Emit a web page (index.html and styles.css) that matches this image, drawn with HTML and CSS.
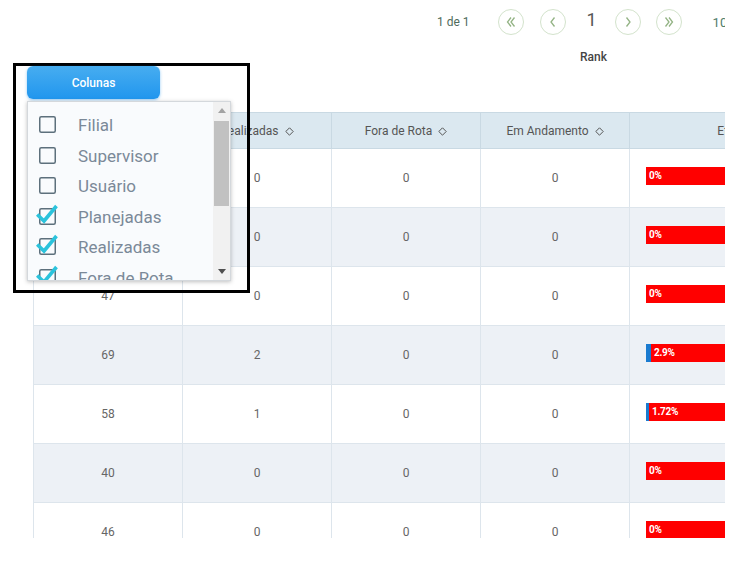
FILE: index.html
```html
<!DOCTYPE html>
<html lang="pt">
<head>
<meta charset="utf-8">
<link rel="stylesheet" href="styles.css">
</head>
<body>
<div class="page">
  <div class="pager">
    <span class="pg-info">1 de 1</span>
    <span class="pg-btn first"><svg width="12" height="12" viewBox="0 0 12 12"><path d="M6 1.5 L2.5 6 L6 10.5 M9.5 1.5 L6 6 L9.5 10.5" fill="none" stroke="#93b384" stroke-width="1.3"/></svg></span>
    <span class="pg-btn prev"><svg width="12" height="12" viewBox="0 0 12 12"><path d="M7.5 1.5 L4 6 L7.5 10.5" fill="none" stroke="#93b384" stroke-width="1.3"/></svg></span>
    <span class="pg-cur">1</span>
    <span class="pg-btn next"><svg width="12" height="12" viewBox="0 0 12 12"><path d="M4.5 1.5 L8 6 L4.5 10.5" fill="none" stroke="#93b384" stroke-width="1.3"/></svg></span>
    <span class="pg-btn last"><svg width="12" height="12" viewBox="0 0 12 12"><path d="M2.5 1.5 L6 6 L2.5 10.5 M6 1.5 L9.5 6 L6 10.5" fill="none" stroke="#93b384" stroke-width="1.3"/></svg></span>
    <span class="pg-size">10</span>
  </div>
  <div class="rank-row"><span class="rank">Rank</span></div>

  <div class="table-wrap">
    <table class="grid">
      <colgroup>
        <col class="c"><col class="c"><col class="c"><col class="c"><col class="cw">
      </colgroup>
      <thead>
        <tr>
          <th>Planejadas <svg class="sort" width="9" height="9" viewBox="0 0 9 9"><path d="M4.5 0.8 L8.2 4.5 L4.5 8.2 L0.8 4.5 Z" fill="none" stroke="#555" stroke-width="1"/></svg></th>
          <th>Realizadas <svg class="sort" width="9" height="9" viewBox="0 0 9 9"><path d="M4.5 0.8 L8.2 4.5 L4.5 8.2 L0.8 4.5 Z" fill="none" stroke="#555" stroke-width="1"/></svg></th>
          <th>Fora de Rota <svg class="sort" width="9" height="9" viewBox="0 0 9 9"><path d="M4.5 0.8 L8.2 4.5 L4.5 8.2 L0.8 4.5 Z" fill="none" stroke="#555" stroke-width="1"/></svg></th>
          <th>Em Andamento <svg class="sort" width="9" height="9" viewBox="0 0 9 9"><path d="M4.5 0.8 L8.2 4.5 L4.5 8.2 L0.8 4.5 Z" fill="none" stroke="#555" stroke-width="1"/></svg></th>
          <th>Eficiência <svg class="sort" width="9" height="9" viewBox="0 0 9 9"><path d="M4.5 0.8 L8.2 4.5 L4.5 8.2 L0.8 4.5 Z" fill="none" stroke="#555" stroke-width="1"/></svg></th>
        </tr>
      </thead>
      <tbody>
        <tr><td>52</td><td>0</td><td>0</td><td>0</td><td class="eff"><div class="bar"><span class="fill" style="width:0px"></span><span class="lbl">0%</span></div></td></tr>
        <tr class="alt"><td>38</td><td>0</td><td>0</td><td>0</td><td class="eff"><div class="bar"><span class="fill" style="width:0px"></span><span class="lbl">0%</span></div></td></tr>
        <tr><td>47</td><td>0</td><td>0</td><td>0</td><td class="eff"><div class="bar"><span class="fill" style="width:0px"></span><span class="lbl">0%</span></div></td></tr>
        <tr class="alt"><td>69</td><td>2</td><td>0</td><td>0</td><td class="eff"><div class="bar"><span class="fill" style="width:5px"></span><span class="lbl">2.9%</span></div></td></tr>
        <tr><td>58</td><td>1</td><td>0</td><td>0</td><td class="eff"><div class="bar"><span class="fill" style="width:3px"></span><span class="lbl">1.72%</span></div></td></tr>
        <tr class="alt"><td>40</td><td>0</td><td>0</td><td>0</td><td class="eff"><div class="bar"><span class="fill" style="width:0px"></span><span class="lbl">0%</span></div></td></tr>
        <tr><td>46</td><td>0</td><td>0</td><td>0</td><td class="eff"><div class="bar"><span class="fill" style="width:0px"></span><span class="lbl">0%</span></div></td></tr>
      </tbody>
    </table>
  </div>
</div>

<div class="callout">
  <button class="btn-cols">Colunas</button>
  <div class="dropdown">
    <ul class="col-list">
      <li><span class="cb"><svg width="22" height="22" viewBox="0 0 22 22"><rect x="3.75" y="4.75" width="15.5" height="15.5" rx="1.5" fill="none" stroke="#5d707c" stroke-width="1.5"/></svg></span>Filial</li>
      <li><span class="cb"><svg width="22" height="22" viewBox="0 0 22 22"><rect x="3.75" y="4.75" width="15.5" height="15.5" rx="1.5" fill="none" stroke="#5d707c" stroke-width="1.5"/></svg></span>Supervisor</li>
      <li><span class="cb"><svg width="22" height="22" viewBox="0 0 22 22"><rect x="3.75" y="4.75" width="15.5" height="15.5" rx="1.5" fill="none" stroke="#5d707c" stroke-width="1.5"/></svg></span>Usuário</li>
      <li><span class="cb"><svg width="22" height="22" viewBox="0 0 22 22"><rect x="3.75" y="4.75" width="15.5" height="15.5" rx="1.5" fill="none" stroke="#5d707c" stroke-width="1.5"/><path d="M1.2 10.5 L8 17 L20.5 2" fill="none" stroke="#2bc3dc" stroke-width="3.6" stroke-linejoin="miter"/></svg></span>Planejadas</li>
      <li><span class="cb"><svg width="22" height="22" viewBox="0 0 22 22"><rect x="3.75" y="4.75" width="15.5" height="15.5" rx="1.5" fill="none" stroke="#5d707c" stroke-width="1.5"/><path d="M1.2 10.5 L8 17 L20.5 2" fill="none" stroke="#2bc3dc" stroke-width="3.6" stroke-linejoin="miter"/></svg></span>Realizadas</li>
      <li><span class="cb"><svg width="22" height="22" viewBox="0 0 22 22"><rect x="3.75" y="4.75" width="15.5" height="15.5" rx="1.5" fill="none" stroke="#5d707c" stroke-width="1.5"/><path d="M1.2 10.5 L8 17 L20.5 2" fill="none" stroke="#2bc3dc" stroke-width="3.6" stroke-linejoin="miter"/></svg></span>Fora de Rota</li>
    </ul>
    <div class="scrollbar">
      <span class="arrow"><svg width="8" height="5" viewBox="0 0 8 5"><path d="M0 5 L4 0 L8 5 Z" fill="#a3a3a3"/></svg></span>
      <div class="track"><div class="thumb"></div></div>
      <span class="arrow"><svg width="8" height="5" viewBox="0 0 8 5"><path d="M0 0 L4 5 L8 0 Z" fill="#505050"/></svg></span>
    </div>
  </div>
</div>
</body>
</html>
```

FILE: styles.css
```css
* { box-sizing: border-box; }

html, body {
  margin: 0;
  padding: 0;
  background: #ffffff;
  font-family: Roboto, "Liberation Sans", sans-serif;
}

.page {
  margin-left: 33px;
  width: 692px;
  overflow: hidden;
}

.pager {
  height: 44px;
  display: flex;
  align-items: center;
  padding-left: 404px;
  white-space: nowrap;
}

.pg-info {
  font-size: 12px;
  color: #4f6b5c;
  width: 33px;
  margin-right: 28px;
}

.pg-btn {
  width: 26px;
  height: 26px;
  border: 1.5px solid #d3e3cc;
  border-radius: 50%;
  display: inline-flex;
  align-items: center;
  justify-content: center;
  flex: none;
}

.pg-btn.first { margin-right: 16px; }
.pg-btn.prev { margin-right: 21px; }
.pg-btn.next { margin-right: 15px; }
.pg-btn.last { margin-right: 31px; }

.pg-cur {
  font-size: 18px;
  color: #555;
  width: 7px;
  margin-right: 21px;
  position: relative;
  top: -3px;
}

.pg-size {
  font-size: 13px;
  color: #4f7d6b;
}

.rank-row {
  height: 26px;
  padding-left: 547px;
  display: flex;
  align-items: center;
}

.rank {
  font-size: 12px;
  font-weight: 500;
  color: #444;
}

.table-wrap {
  margin-top: 42px;
  height: 426px;
  overflow: hidden;
}

.grid {
  border-collapse: collapse;
  table-layout: fixed;
  width: 838px;
  font-size: 12px;
}

.grid col.c { width: 149px; }
.grid col.cw { width: 242px; }

.grid th {
  height: 36px;
  background: #dbe8f0;
  color: #555;
  font-weight: 400;
  text-align: center;
  border: 1px solid #c9d9e3;
  white-space: nowrap;
  padding: 0;
}

.grid .sort {
  vertical-align: -1px;
  margin-left: 3px;
}

.grid td {
  height: 59px;
  text-align: center;
  color: #666;
  border: 1px solid #dde5ec;
  padding: 0;
  vertical-align: middle;
}

.grid tr.alt td { background: #edf1f6; }

.grid td.eff {
  text-align: left;
  padding-left: 16px;
  padding-bottom: 5px;
}

.bar {
  height: 18px;
  width: 200px;
  background: #ff0000;
  display: flex;
  align-items: center;
}

.bar .fill {
  height: 18px;
  background: #1a7bd0;
  flex: none;
}

.bar .lbl {
  font-size: 10px;
  font-weight: 700;
  color: #ffffff;
  padding-left: 3px;
  letter-spacing: -0.3px;
}

.callout {
  position: absolute;
  left: 13px;
  top: 63px;
  width: 237px;
  height: 230px;
  border: 3px solid #000;
  padding-left: 11px;
}

.btn-cols {
  display: block;
  width: 133px;
  height: 33px;
  border: none;
  border-radius: 6px;
  background: linear-gradient(#47adf0, #2196ee);
  box-shadow: 0 1px 3px rgba(33, 150, 238, 0.5);
  color: #fff;
  font-family: Roboto, "Liberation Sans", sans-serif;
  font-size: 12px;
  font-weight: 500;
  padding: 0;
}

.dropdown {
  margin-top: 2px;
  width: 204px;
  height: 180px;
  background: #f9fbfd;
  border: 1px solid #d4d8dc;
  box-shadow: 0 1px 4px rgba(0, 0, 0, 0.25);
  display: flex;
  overflow: hidden;
}

.col-list {
  list-style: none;
  margin: 0;
  padding: 8px 0 0 8px;
  flex: 1;
  overflow: hidden;
}

.col-list li {
  height: 30.5px;
  display: flex;
  align-items: center;
  font-size: 17px;
  color: #7b8998;
  white-space: nowrap;
}

.cb {
  width: 22px;
  height: 22px;
  margin-right: 20px;
  flex: none;
  position: relative;
  top: -2px;
}

.cb svg { display: block; }

.scrollbar {
  width: 17px;
  flex: none;
  background: #f1f1f1;
  display: flex;
  flex-direction: column;
  align-items: center;
}

.scrollbar .arrow {
  height: 17px;
  display: flex;
  align-items: center;
  justify-content: center;
}

.scrollbar .track {
  flex: 1;
  width: 100%;
  padding: 0 1px;
}

.thumb {
  margin-top: 2px;
  height: 85px;
  background: #c1c1c1;
}
```
